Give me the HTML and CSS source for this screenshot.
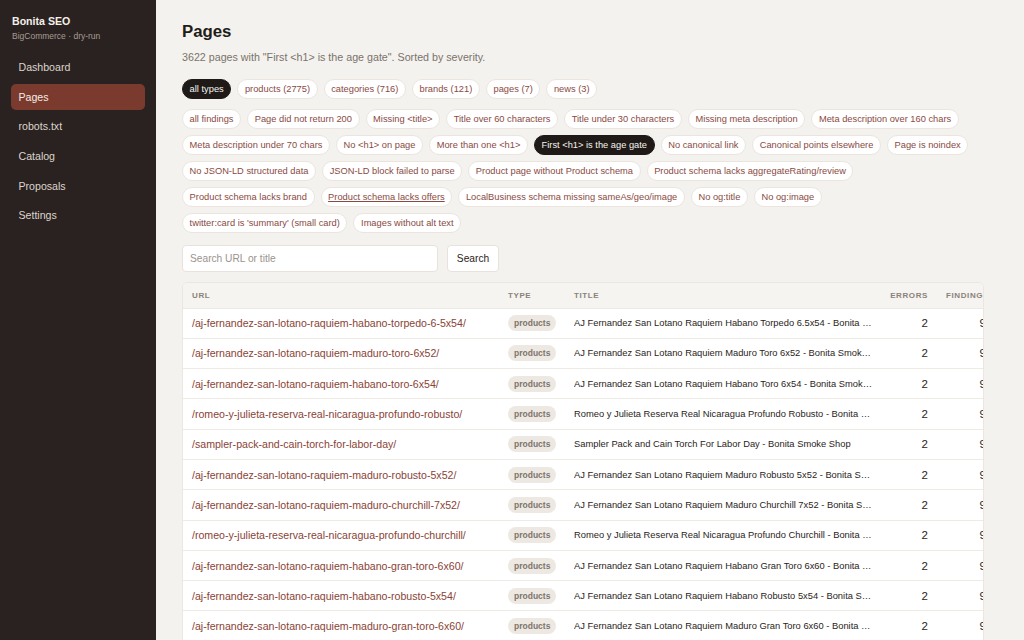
FILE: index.html
```html
<!DOCTYPE html>
<html lang="en">

<head>
    <meta charset="UTF-8">
    <meta name="viewport" content="width=device-width, initial-scale=1.0">
    <title>Pages - Bonita SEO</title>
    <link rel="stylesheet" href="styles.css">
</head>

<body>
    <aside class="sidebar">
        <div class="brand">
            <div class="brand-name">Bonita SEO</div>
            <div class="brand-sub">BigCommerce · dry-run</div>
        </div>
        <nav class="nav">
            <a href="#">Dashboard</a>
            <a href="#" class="active">Pages</a>
            <a href="#">robots.txt</a>
            <a href="#">Catalog</a>
            <a href="#">Proposals</a>
            <a href="#">Settings</a>
        </nav>
    </aside>

    <main class="main">
        <h1>Pages</h1>
        <p class="subtitle">3622 pages with "First &lt;h1&gt; is the age gate". Sorted by severity.</p>

        <div class="chips type-chips">
            <a href="#" class="chip on">all types</a>
            <a href="#" class="chip">products (2775)</a>
            <a href="#" class="chip">categories (716)</a>
            <a href="#" class="chip">brands (121)</a>
            <a href="#" class="chip">pages (7)</a>
            <a href="#" class="chip">news (3)</a>
        </div>

        <div class="chips finding-chips">
            <a href="#" class="chip">all findings</a>
            <a href="#" class="chip">Page did not return 200</a>
            <a href="#" class="chip">Missing &lt;title&gt;</a>
            <a href="#" class="chip">Title over 60 characters</a>
            <a href="#" class="chip">Title under 30 characters</a>
            <a href="#" class="chip">Missing meta description</a>
            <a href="#" class="chip">Meta description over 160 chars</a>
            <a href="#" class="chip">Meta description under 70 chars</a>
            <a href="#" class="chip">No &lt;h1&gt; on page</a>
            <a href="#" class="chip">More than one &lt;h1&gt;</a>
            <a href="#" class="chip on">First &lt;h1&gt; is the age gate</a>
            <a href="#" class="chip">No canonical link</a>
            <a href="#" class="chip">Canonical points elsewhere</a>
            <a href="#" class="chip">Page is noindex</a>
            <a href="#" class="chip">No JSON-LD structured data</a>
            <a href="#" class="chip">JSON-LD block failed to parse</a>
            <a href="#" class="chip">Product page without Product schema</a>
            <a href="#" class="chip">Product schema lacks aggregateRating/review</a>
            <a href="#" class="chip">Product schema lacks brand</a>
            <a href="#" class="chip hover">Product schema lacks offers</a>
            <a href="#" class="chip">LocalBusiness schema missing sameAs/geo/image</a>
            <a href="#" class="chip">No og:title</a>
            <a href="#" class="chip">No og:image</a>
            <a href="#" class="chip">twitter:card is 'summary' (small card)</a>
            <a href="#" class="chip">Images without alt text</a>
        </div>

        <form class="search">
            <input type="text" class="search-input" placeholder="Search URL or title">
            <button type="submit" class="search-btn">Search</button>
        </form>

        <div class="table-wrap">
            <table class="pages">
                <colgroup>
                    <col class="c-url">
                    <col class="c-type">
                    <col class="c-title">
                    <col class="c-err">
                    <col class="c-find">
                </colgroup>
                <thead>
                    <tr>
                        <th>URL</th>
                        <th>Type</th>
                        <th>Title</th>
                        <th class="num">Errors</th>
                        <th>Findings</th>
                    </tr>
                </thead>
                <tbody id="rows"></tbody>
            </table>
        </div>
    </main>

    <script>
        const pages = [
            ["/aj-fernandez-san-lotano-raquiem-habano-torpedo-6-5x54/", "AJ Fernandez San Lotano Raquiem Habano Torpedo 6.5x54 - Bonita Smoke Shop"],
            ["/aj-fernandez-san-lotano-raquiem-maduro-toro-6x52/", "AJ Fernandez San Lotano Raquiem Maduro Toro 6x52 - Bonita Smoke Shop"],
            ["/aj-fernandez-san-lotano-raquiem-habano-toro-6x54/", "AJ Fernandez San Lotano Raquiem Habano Toro 6x54 - Bonita Smoke Shop"],
            ["/romeo-y-julieta-reserva-real-nicaragua-profundo-robusto/", "Romeo y Julieta Reserva Real Nicaragua Profundo Robusto - Bonita Smoke Shop"],
            ["/sampler-pack-and-cain-torch-for-labor-day/", "Sampler Pack and Cain Torch For Labor Day - Bonita Smoke Shop"],
            ["/aj-fernandez-san-lotano-raquiem-maduro-robusto-5x52/", "AJ Fernandez San Lotano Raquiem Maduro Robusto 5x52 - Bonita Smoke Shop"],
            ["/aj-fernandez-san-lotano-raquiem-maduro-churchill-7x52/", "AJ Fernandez San Lotano Raquiem Maduro Churchill 7x52 - Bonita Smoke Shop"],
            ["/romeo-y-julieta-reserva-real-nicaragua-profundo-churchill/", "Romeo y Julieta Reserva Real Nicaragua Profundo Churchill - Bonita Smoke Shop"],
            ["/aj-fernandez-san-lotano-raquiem-habano-gran-toro-6x60/", "AJ Fernandez San Lotano Raquiem Habano Gran Toro 6x60 - Bonita Smoke Shop"],
            ["/aj-fernandez-san-lotano-raquiem-habano-robusto-5x54/", "AJ Fernandez San Lotano Raquiem Habano Robusto 5x54 - Bonita Smoke Shop"],
            ["/aj-fernandez-san-lotano-raquiem-maduro-gran-toro-6x60/", "AJ Fernandez San Lotano Raquiem Maduro Gran Toro 6x60 - Bonita Smoke Shop"],
            ["/aj-fernandez-san-lotano-raquiem-habano-churchill-7x50/", "AJ Fernandez San Lotano Raquiem Habano Churchill 7x50 - Bonita Smoke Shop"]
        ];

        const tbody = document.querySelector("#rows");

        pages.forEach(([url, title]) => {
            const tr = document.createElement("tr");
            tr.innerHTML =
                '<td><a href="#" class="url"></a></td>' +
                '<td><span class="badge">products</span></td>' +
                '<td><div class="title"></div></td>' +
                '<td class="num">2</td>' +
                '<td class="num find">9</td>';
            tr.querySelector(".url").textContent = url;
            tr.querySelector(".title").textContent = title;
            tbody.appendChild(tr);
        });
    </script>

</body>

</html>
```

FILE: styles.css
```css
* {
    box-sizing: border-box;
    margin: 0;
    font-family: "Liberation Sans", Arial, sans-serif;
}

body {
    display: flex;
    min-height: 100vh;
    background: #f4f2ee;
    color: #2a2421;
    overflow: hidden;
}

a {
    text-decoration: none;
    color: inherit;
}

/* sidebar */

.sidebar {
    width: 156px;
    flex: 0 0 156px;
    background: #2a2220;
    color: #ddd5cd;
    padding: 15px 11px;
}

.brand {
    padding: 0 1px;
    margin-bottom: 13px;
}

.brand-name {
    font-size: 10.6px;
    font-weight: 700;
    color: #f4efea;
}

.brand-sub {
    font-size: 8.5px;
    color: #a69c94;
    margin-top: 4px;
}

.nav {
    display: flex;
    flex-direction: column;
    gap: 3.7px;
}

.nav a {
    display: block;
    font-size: 10.6px;
    padding: 7px 7.5px;
    border-radius: 5px;
    color: #ddd5cd;
}

.nav a.active {
    background: #7a3b2e;
    color: #f6ebe6;
}

/* main */

.main {
    flex: 1 1 0%;
    min-width: 0;
    padding: 22px 40px 0 26px;
}

.main h1 {
    font-size: 16.8px;
    font-weight: 700;
    color: #221c19;
}

.subtitle {
    font-size: 10.7px;
    color: #7a726b;
    margin-top: 9px;
}

.chips {
    display: flex;
    flex-wrap: wrap;
    gap: 6px;
}

.type-chips {
    margin-top: 16px;
}

.finding-chips {
    margin-top: 10px;
}

.chip {
    display: inline-flex;
    align-items: center;
    height: 20px;
    padding: 0 6.6px;
    border-radius: 999px;
    background: #fff;
    border: 1px solid #ebe5de;
    color: #8a4a3f;
    font-size: 9.3px;
    white-space: nowrap;
}

.chip.on {
    background: #1f1a17;
    border-color: #1f1a17;
    color: #f6f2ee;
}

.chip.hover {
    text-decoration: underline;
}

/* search */

.search {
    display: flex;
    gap: 9px;
    margin-top: 12px;
}

.search-input,
.search-btn {
    appearance: none;
    outline: none;
    height: 27px;
    border: 1px solid #e8e2db;
    border-radius: 4px;
    background: #fff;
    font-size: 10.2px;
}

.search-input {
    width: 256px;
    padding: 0 7px;
    color: #2a2421;
}

.search-input::placeholder {
    color: #9b938c;
}

.search-btn {
    width: 52px;
    color: #2a2421;
    cursor: pointer;
}

/* table */

.table-wrap {
    margin-top: 10px;
    background: #fff;
    border: 1px solid #ebe6df;
    border-radius: 6px;
    overflow: hidden;
}

.pages {
    table-layout: fixed;
    width: 834px;
    border-collapse: collapse;
}

.c-url { width: 316px; }
.c-type { width: 66px; }
.c-title { width: 316px; }
.c-err { width: 56px; }
.c-find { width: 80px; }

.pages th {
    height: 25px;
    background: #f6f4f0;
    text-align: left;
    font-size: 8px;
    font-weight: 700;
    letter-spacing: 0.6px;
    text-transform: uppercase;
    color: #8a827b;
    padding: 0 9px;
    border-bottom: 1px solid #ece8e2;
}

.pages td {
    height: 30.3px;
    padding: 0 9px;
    border-bottom: 1px solid #eeeae4;
    font-size: 10.6px;
    white-space: nowrap;
}

.pages .num {
    text-align: right;
}

.pages td.num {
    font-size: 11.5px;
    color: #2a2421;
}

.pages td.find {
    padding-right: 31px;
}

.url {
    color: #8a4336;
}

.badge {
    display: inline-block;
    padding: 3px 6px;
    border-radius: 999px;
    background: #ede8e2;
    color: #7d746d;
    font-size: 8.5px;
    font-weight: 700;
}

.title {
    font-size: 9.35px;
    color: #2a2421;
    overflow: hidden;
    text-overflow: ellipsis;
}
```
